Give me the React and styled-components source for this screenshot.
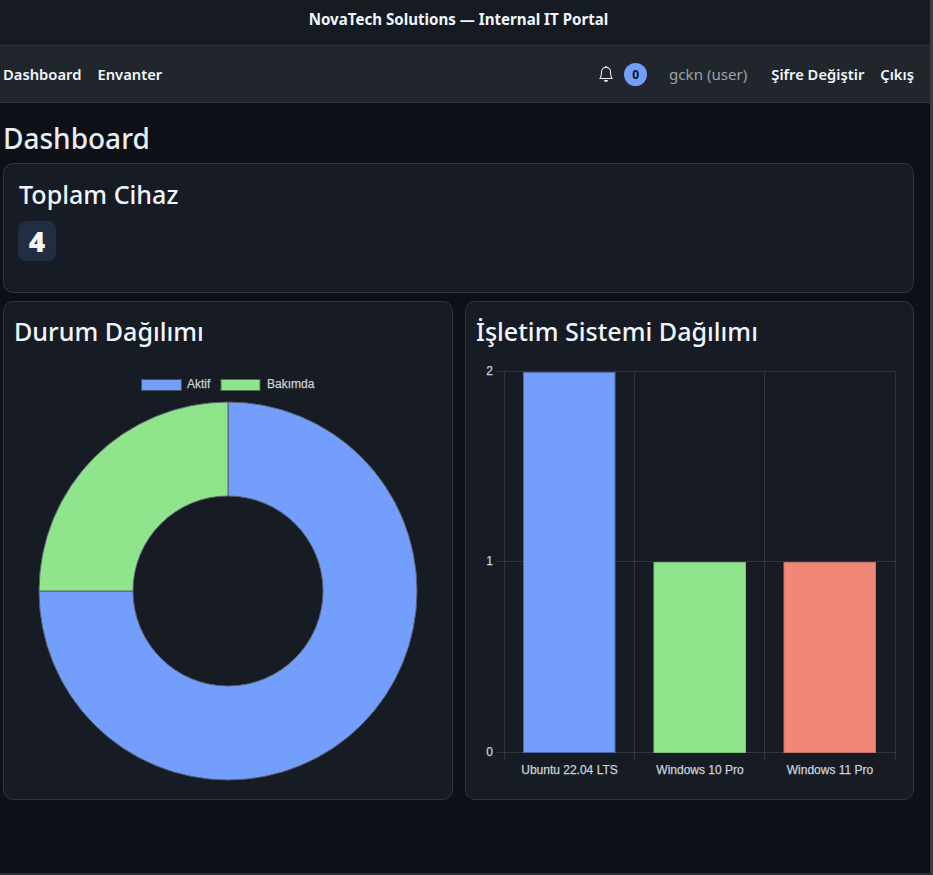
import React from 'react'
import styled, { createGlobalStyle } from 'styled-components'
import { BsBell } from 'react-icons/bs'

const GlobalStyle = createGlobalStyle`
  html, body {
    margin: 0;
    padding: 0;
    background: #0d1117;
    overflow: hidden;
  }
  * {
    box-sizing: border-box;
  }
`

const Frame = styled.div`
  width: 933px;
  height: 875px;
  overflow: hidden;
  background: #0d1117;
  border-right: 3px solid #3a3d42;
  border-bottom: 2px solid #2a2e35;
  font-family: "Noto Sans", "Open Sans", sans-serif;
  color: #f0f6fc;
`

const TitleBar = styled.header`
  height: 46px;
  padding: 0 16px 8px 3px;
  display: flex;
  align-items: center;
  justify-content: center;
  background: #161b22;
  border-bottom: 1px solid #30363d;
  font-size: 15.1px;
  font-weight: 700;
`

const NavBar = styled.nav`
  height: 57px;
  padding: 0 16px 0 3px;
  display: flex;
  align-items: center;
  justify-content: space-between;
  background: #21262d;
  border-bottom: 1px solid #30363d;
`

const NavGroup = styled.div`
  display: flex;
  align-items: center;
  gap: 16px;
`

const NavLink = styled.a`
  color: #f0f6fc;
  font-size: 14.75px;
  font-weight: 600;
  text-decoration: none;
`

const BellWrap = styled.span`
  display: flex;
  color: #f0f6fc;
  font-size: 16px;
  margin-right: 1px;
`

const CountBadge = styled.span`
  width: 23px;
  height: 23px;
  border-radius: 50%;
  background: #739efb;
  color: #0d1117;
  font-size: 12px;
  font-weight: 700;
  display: flex;
  align-items: center;
  justify-content: center;
  margin-left: -7px;
  margin-right: 6px;
`

const UserName = styled.span`
  color: #9ba3ac;
  font-size: 15.1px;
  margin-right: 8px;
`

const Main = styled.main`
  padding: 0 16px 0 3px;
`

const PageTitle = styled.h1`
  margin: 0;
  padding-top: 15px;
  height: 60px;
  font-size: 28px;
  font-weight: 500;
  line-height: 40px;
  color: #e6edf3;
`

const Card = styled.section`
  background: #171c24;
  border: 1px solid #30363d;
  border-radius: 10px;
`

const TotalCard = styled(Card)`
  height: 130px;
  padding: 13px 15px;
`

const CardTitle = styled.h2`
  margin: 0;
  font-size: 25.1px;
  font-weight: 500;
  line-height: 34px;
  color: #f0f6fc;
`

const TotalValue = styled.div`
  width: 38px;
  height: 40px;
  margin: 10px 0 0 -1px;
  border-radius: 8px;
  background: #212d42;
  display: flex;
  align-items: center;
  justify-content: center;
  font-size: 28px;
  font-weight: 900;
  color: #f0f6fc;
`

const ChartGrid = styled.div`
  display: grid;
  grid-template-columns: 450px 449px;
  gap: 12px;
  margin-top: 8px;
`

const ChartCard = styled(Card)`
  height: 499px;
  padding: 12px 10px;
`

const ChartSvg = styled.svg`
  display: block;
  margin-top: 7px;
`

const ChartLabel = styled.text`
  font-family: "Liberation Sans", Arial, sans-serif;
  font-size: 12px;
  fill: #c9d1d9;
  stroke: #c9d1d9;
  stroke-width: 0.25px;
`

const CX = 214
const CY = 236
const OUTER = 189
const INNER = 95

const pt = (r, deg) => {
  const a = ((deg - 90) * Math.PI) / 180
  return `${CX + r * Math.cos(a)} ${CY + r * Math.sin(a)}`
}

const slice = (from, to) => {
  const large = to - from > 180 ? 1 : 0
  return `M${pt(OUTER, from)} A${OUTER} ${OUTER} 0 ${large} 1 ${pt(OUTER, to)} L${pt(INNER, to)} A${INNER} ${INNER} 0 ${large} 0 ${pt(INNER, from)} Z`
}

const DonutChart = () => (
  <ChartSvg width="427" height="430" viewBox="0 0 427 430">
    <rect x="127.5" y="24.5" width="40" height="11" fill="#739efb" stroke="#3f4d68" />
    <ChartLabel x="173" y="33">Aktif</ChartLabel>
    <rect x="207" y="24.5" width="39" height="11" fill="#90e48c" stroke="#4c6f52" />
    <ChartLabel x="253" y="33">Bakımda</ChartLabel>
    <path d={slice(0, 270)} fill="#739efb" stroke="#56606e" />
    <path d={slice(270, 360)} fill="#90e48c" stroke="#56606e" />
  </ChartSvg>
)

const bars = [
  { label: 'Ubuntu 22.04 LTS', value: 2, x: 47.5, fill: '#739efb', edge: '#4c6aa8' },
  { label: 'Windows 10 Pro', value: 1, x: 178, fill: '#90e48c', edge: '#7cc27c' },
  { label: 'Windows 11 Pro', value: 1, x: 308, fill: '#f18776', edge: '#c87468' },
]

const BarChart = () => {
  const left = 28.5
  const right = 419.5
  const top = 16.5
  const bottom = 397.5
  const mid = 206.5
  const gridX = [left, 158.5, 288.5, right]
  const rows = [
    { y: top, label: '2' },
    { y: mid, label: '1' },
    { y: bottom, label: '0' },
  ]
  return (
    <ChartSvg width="427" height="430" viewBox="0 0 427 430">
      {gridX.map((x) => (
        <line key={x} x1={x} x2={x} y1={top} y2={405} stroke="#30363d" />
      ))}
      {rows.map((r) => (
        <g key={r.label}>
          <line x1="21" x2={right} y1={r.y} y2={r.y} stroke="#30363d" />
          <ChartLabel x="17" y={r.y + 3.5} textAnchor="end">{r.label}</ChartLabel>
        </g>
      ))}
      {bars.map((b) => {
        const y = (b.value === 2 ? top : mid) + 1
        return (
          <g key={b.label}>
            <rect x={b.x} y={y} width="91.5" height={bottom - y} fill={b.fill} stroke={b.edge} />
            <ChartLabel x={b.x + 46} y="419" textAnchor="middle">{b.label}</ChartLabel>
          </g>
        )
      })}
    </ChartSvg>
  )
}

export default function App() {
  return (
    <Frame>
      <GlobalStyle />
      <TitleBar>NovaTech Solutions — Internal IT Portal</TitleBar>
      <NavBar>
        <NavGroup>
          <NavLink href="#">Dashboard</NavLink>
          <NavLink href="#">Envanter</NavLink>
        </NavGroup>
        <NavGroup>
          <BellWrap><BsBell /></BellWrap>
          <CountBadge>0</CountBadge>
          <UserName>gckn (user)</UserName>
          <NavLink href="#">Şifre Değiştir</NavLink>
          <NavLink href="#">Çıkış</NavLink>
        </NavGroup>
      </NavBar>
      <Main>
        <PageTitle>Dashboard</PageTitle>
        <TotalCard>
          <CardTitle>Toplam Cihaz</CardTitle>
          <TotalValue>4</TotalValue>
        </TotalCard>
        <ChartGrid>
          <ChartCard>
            <CardTitle>Durum Dağılımı</CardTitle>
            <DonutChart />
          </ChartCard>
          <ChartCard>
            <CardTitle>İşletim Sistemi Dağılımı</CardTitle>
            <BarChart />
          </ChartCard>
        </ChartGrid>
      </Main>
    </Frame>
  )
}
